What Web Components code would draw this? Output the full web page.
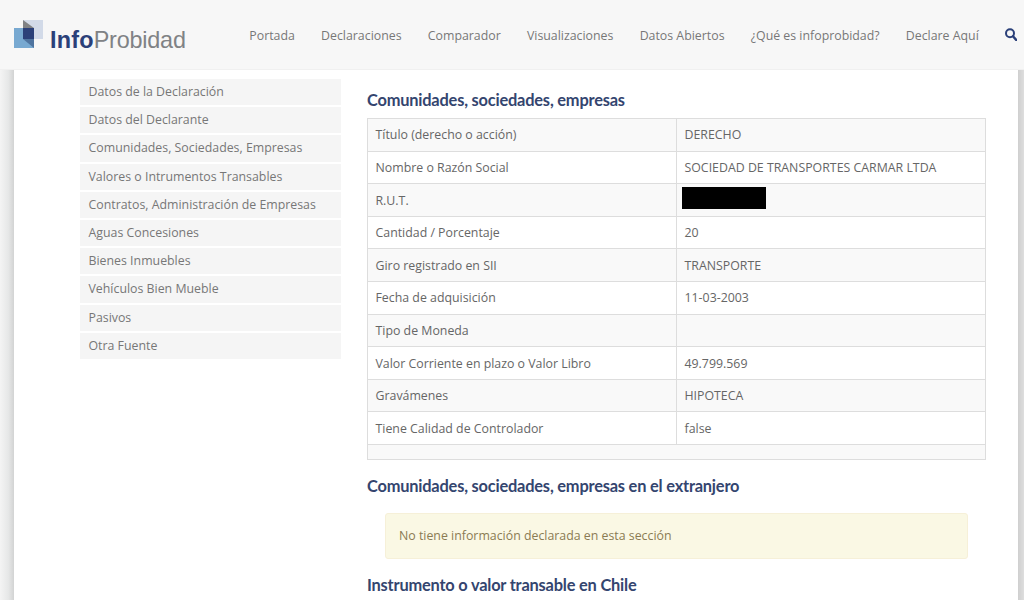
<!DOCTYPE html>
<html lang="es">
<head>
<meta charset="utf-8">
<title>InfoProbidad</title>
<style>
  html, body { margin: 0; height: 100%; overflow: hidden; }
  body { font-family: "Open Sans", sans-serif; background: #fff; }
</style>
</head>
<body>
<ip-page>
  <ip-header slot="top"></ip-header>
  <ip-sidebar slot="side"></ip-sidebar>
  <ip-section heading="Comunidades, sociedades, empresas" style="margin-top: 10px">
    <ip-table></ip-table>
  </ip-section>
  <ip-section heading="Comunidades, sociedades, empresas en el extranjero" style="margin-top: 15px">
    <ip-alert>No tiene información declarada en esta sección</ip-alert>
  </ip-section>
  <ip-section heading="Instrumento o valor transable en Chile"></ip-section>
</ip-page>
<script>
class IpPage extends HTMLElement {
    constructor() {
        super();
        this.attachShadow({ mode: 'open' });
        this.shadowRoot.innerHTML = `
            <style>
                :host { display: flex; flex-direction: column; height: 600px; overflow: hidden; }
                .frame {
                    flex: 1;
                    display: flex;
                    min-height: 0;
                    background: #fff;
                }
                .edge-left { width: 14px; background: linear-gradient(to right, #f4f4f4, #e6e7e7 60%, #d2d3d3); }
                .edge-right { width: 6px; background: linear-gradient(to right, #cfcfcf, #dedede); }
                .sheet {
                    flex: 1;
                    display: grid;
                    grid-template-columns: 260.5px 619px;
                    column-gap: 26.5px;
                    padding: 9px 0 0 66px;
                    align-content: start;
                    align-items: start;
                    overflow: hidden;
                }
                .content { display: flex; flex-direction: column; }
            </style>
            <slot name="top"></slot>
            <div class="frame">
                <div class="edge-left"></div>
                <div class="sheet">
                    <slot name="side"></slot>
                    <div class="content"><slot></slot></div>
                </div>
                <div class="edge-right"></div>
            </div>
        `;
    }
}

class IpHeader extends HTMLElement {
    constructor() {
        super();
        this.attachShadow({ mode: 'open' });
        const links = ['Portada', 'Declaraciones', 'Comparador', 'Visualizaciones', 'Datos Abiertos', '¿Qué es infoprobidad?', 'Declare Aquí'];
        this.shadowRoot.innerHTML = `
            <style>
                :host {
                    display: flex;
                    align-items: center;
                    height: 70px;
                    box-sizing: border-box;
                    background: #f7f7f7;
                    border-bottom: 1px solid #f0f0f0;
                    padding: 0 7px 0 14px;
                }
                .logo { display: flex; align-items: flex-start; height: 30px; margin-top: 3px; }
                .logo svg { display: block; margin-top: -1px; }
                .name {
                    margin-left: 7px;
                    margin-top: 4px;
                    font: 23.4px/30px "Liberation Sans", sans-serif;
                    letter-spacing: -0.2px;
                    color: #808285;
                    white-space: nowrap;
                }
                .name b { color: #2b4079; font-weight: 700; letter-spacing: 0.2px; }
                nav {
                    margin-left: auto;
                    padding-top: 2px;
                    display: flex;
                    gap: 26.2px;
                    align-items: center;
                    font: 12.35px/20px "Open Sans", sans-serif;
                    color: #777;
                    white-space: nowrap;
                }
                nav svg { display: block; margin-top: -2px; }
            </style>
            <div class="logo">
                <svg width="29" height="28" viewBox="0 0 29 28">
                    <rect x="9" y="0" width="20" height="19" fill="#d2dae8"/>
                    <rect x="0" y="8" width="20" height="20" fill="#78a9d1"/>
                    <rect x="9" y="8" width="11" height="11" fill="#2b4079"/>
                    <polygon points="9,0 20,8 9,8" fill="#808285"/>
                    <polygon points="9,19 20,19 20,28" fill="#4f749f"/>
                </svg>
                <div class="name"><b>Info</b>Probidad</div>
            </div>
            <nav>
                ${links.map(l => `<span>${l}</span>`).join('')}
                <svg width="12" height="13" viewBox="0 0 12 13" fill="none" stroke="#2b4079">
                    <circle cx="5" cy="5.3" r="4" stroke-width="2"/>
                    <line x1="8" y1="8.3" x2="11.2" y2="12" stroke-width="2.4" stroke-linecap="round"/>
                </svg>
            </nav>
        `;
    }
}

class IpSidebar extends HTMLElement {
    constructor() {
        super();
        this.attachShadow({ mode: 'open' });
        const items = ['Datos de la Declaración', 'Datos del Declarante', 'Comunidades, Sociedades, Empresas', 'Valores o Intrumentos Transables', 'Contratos, Administración de Empresas', 'Aguas Concesiones', 'Bienes Inmuebles', 'Vehículos Bien Mueble', 'Pasivos', 'Otra Fuente'];
        this.shadowRoot.innerHTML = `
            <style>
                :host { display: flex; flex-direction: column; gap: 2px; }
                div {
                    height: 26.2px;
                    padding-left: 8.5px;
                    background: #f5f5f5;
                    font: 12.35px/25.4px "Open Sans", sans-serif;
                    color: #777;
                    white-space: nowrap;
                }
            </style>
            ${items.map(i => `<div>${i}</div>`).join('')}
        `;
    }
}

class IpSection extends HTMLElement {
    constructor() {
        super();
        this.attachShadow({ mode: 'open' });
        this.shadowRoot.innerHTML = `
            <style>
                :host { display: block; }
                h2 {
                    margin: 0;
                    font: 700 16.4px/21px Lato, sans-serif;
                    letter-spacing: -0.2px;
                    color: #34456f;
                    white-space: nowrap;
                }
            </style>
            <h2></h2>
            <slot></slot>
        `;
        this.shadowRoot.querySelector('h2').textContent = this.getAttribute('heading');
    }
}

class IpTable extends HTMLElement {
    constructor() {
        super();
        this.attachShadow({ mode: 'open' });
        const rows = [
            ['Título (derecho o acción)', 'DERECHO'],
            ['Nombre o Razón Social', 'SOCIEDAD DE TRANSPORTES CARMAR LTDA'],
            ['R.U.T.', '<i></i>'],
            ['Cantidad / Porcentaje', '20'],
            ['Giro registrado en SII', 'TRANSPORTE'],
            ['Fecha de adquisición', '11-03-2003'],
            ['Tipo de Moneda', ''],
            ['Valor Corriente en plazo o Valor Libro', '49.799.569'],
            ['Gravámenes', 'HIPOTECA'],
            ['Tiene Calidad de Controlador', 'false']
        ];
        this.shadowRoot.innerHTML = `
            <style>
                :host { display: block; margin-top: 8px; }
                .grid {
                    display: grid;
                    grid-template-columns: 309px 1fr;
                    grid-template-rows: repeat(10, 32.6px) 15px;
                    border: 1px solid #dddddd;
                    border-width: 1px 1px 0 1px;
                    font: 12.35px/20px "Open Sans", sans-serif;
                    color: #666;
                }
                .cell {
                    box-sizing: border-box;
                    display: flex;
                    align-items: center;
                    padding: 1.1px 7.5px 0;
                    border-bottom: 1px solid #dddddd;
                    white-space: nowrap;
                }
                .cell:nth-child(odd) { border-right: 1px solid #dddddd; }
                .shade { background: #f9f9f9; }
                i { display: block; width: 84px; height: 22px; margin: -4.1px 0 0 -2.5px; background: #000; }
                .foot { grid-column: 1 / 3; background: #f9f9f9; border-bottom: 1px solid #dddddd; }
            </style>
            <div class="grid">
                ${rows.map((r, n) => {
                    const shade = n % 2 === 0 ? ' shade' : '';
                    return `<div class="cell${shade}">${r[0]}</div><div class="cell${shade}">${r[1]}</div>`;
                }).join('')}
                <div class="foot"></div>
            </div>
        `;
    }
}

class IpAlert extends HTMLElement {
    constructor() {
        super();
        this.attachShadow({ mode: 'open' });
        this.shadowRoot.innerHTML = `
            <style>
                :host {
                    display: block;
                    box-sizing: border-box;
                    margin: 17px 18px 15px 18px;
                    height: 46px;
                    padding: 0 13px;
                    background: #faf8e4;
                    border: 1px solid #f6f0d8;
                    border-radius: 3px;
                    font: 12.35px/44px "Open Sans", sans-serif;
                    color: #8a7b53;
                }
            </style>
            <slot></slot>
        `;
    }
}

customElements.define('ip-page', IpPage);
customElements.define('ip-header', IpHeader);
customElements.define('ip-sidebar', IpSidebar);
customElements.define('ip-section', IpSection);
customElements.define('ip-table', IpTable);
customElements.define('ip-alert', IpAlert);
</script>
</body>
</html>
